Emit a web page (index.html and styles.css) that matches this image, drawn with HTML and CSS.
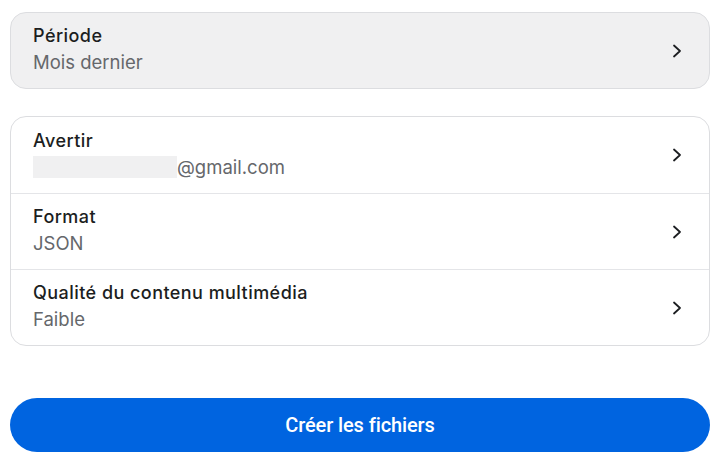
FILE: index.html
```html
<!DOCTYPE html>
<html lang="fr">
<head>
<meta charset="utf-8">
<link rel="stylesheet" href="styles.css">
</head>
<body>
<main class="page">
  <section class="card card-grey">
    <div class="row">
      <div class="texts">
        <div class="title">Période</div>
        <div class="sub">Mois dernier</div>
      </div>
      <svg class="chev" viewBox="0 0 12 16" width="12" height="16"><path d="M3 2.5 L9 8 L3 13.5" fill="none" stroke="#1c1e21" stroke-width="1.8" stroke-linecap="round" stroke-linejoin="round"/></svg>
    </div>
  </section>

  <section class="card card-white">
    <div class="row">
      <div class="texts">
        <div class="title">Avertir</div>
        <div class="sub email"><span class="mask"></span>@gmail.com</div>
      </div>
      <svg class="chev" viewBox="0 0 12 16" width="12" height="16"><path d="M3 2.5 L9 8 L3 13.5" fill="none" stroke="#1c1e21" stroke-width="1.8" stroke-linecap="round" stroke-linejoin="round"/></svg>
    </div>
    <div class="row divided">
      <div class="texts">
        <div class="title">Format</div>
        <div class="sub">JSON</div>
      </div>
      <svg class="chev" viewBox="0 0 12 16" width="12" height="16"><path d="M3 2.5 L9 8 L3 13.5" fill="none" stroke="#1c1e21" stroke-width="1.8" stroke-linecap="round" stroke-linejoin="round"/></svg>
    </div>
    <div class="row divided">
      <div class="texts">
        <div class="title">Qualité du contenu multimédia</div>
        <div class="sub">Faible</div>
      </div>
      <svg class="chev" viewBox="0 0 12 16" width="12" height="16"><path d="M3 2.5 L9 8 L3 13.5" fill="none" stroke="#1c1e21" stroke-width="1.8" stroke-linecap="round" stroke-linejoin="round"/></svg>
    </div>
  </section>

  <button class="cta">Créer les fichiers</button>
</main>
</body>
</html>
```

FILE: styles.css
```css
* { box-sizing: border-box; }
html, body { margin: 0; padding: 0; background: #ffffff; }
body { font-family: Inter, "Noto Sans", sans-serif; color: #1c1e21; }

.page {
  width: 718px;
  padding: 12px 8px 0 10px;
  display: flex;
  flex-direction: column;
}

.card {
  width: 700px;
  border-radius: 16px;
  border: 1px solid #dcdde0;
  overflow: hidden;
}
.card-grey { background: #f0f0f1; }
.card-white { background: #ffffff; margin-top: 27px; }

.row {
  height: 76px;
  display: flex;
  align-items: center;
  justify-content: space-between;
  padding: 0 26px 2px 22px;
}
.card-grey .row { height: 75px; }
.row.divided { border-top: 1px solid #e4e5e8; }
.row .chev { margin-top: 2px; }

.texts { display: flex; flex-direction: column; gap: 3px; }
.title { font-size: 18px; line-height: 22px; font-weight: 500; color: #1c1e21; letter-spacing: 0.45px; }
.sub { font-size: 18.5px; line-height: 24px; color: #65676b; }
.email { display: flex; align-items: center; }
.mask { display: inline-block; width: 144px; height: 22px; background: #f0f0f1; margin-right: 0; }

.chev { flex: none; }

.cta {
  margin-top: 52px;
  width: 700px;
  height: 54px;
  border: none;
  border-radius: 27px;
  background: #0064e0;
  color: #ffffff;
  font-family: Roboto, "Noto Sans", sans-serif;
  font-size: 20px;
  font-weight: 500;
  letter-spacing: -0.1px;
  cursor: pointer;
}
```
